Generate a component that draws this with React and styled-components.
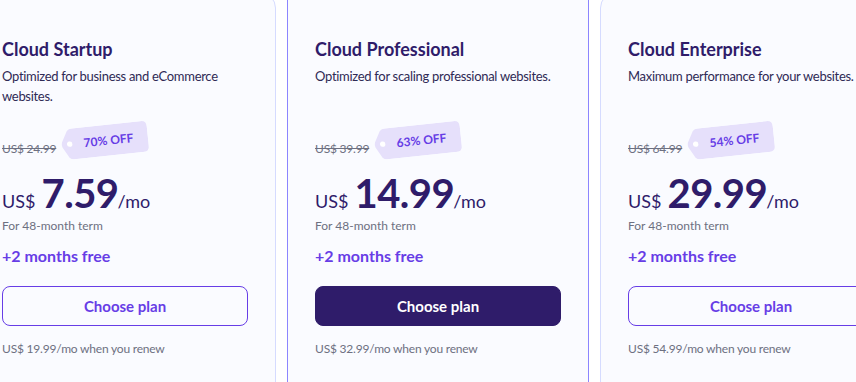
import React from "react";
import styled, { createGlobalStyle } from "styled-components";

const Global = createGlobalStyle`
  html, body { margin: 0; padding: 0; background: #ffffff; }
  body { font-family: Lato, "Noto Sans", sans-serif; overflow: hidden; }
  * { box-sizing: border-box; }
`;

const Row = styled.div`
  display: flex;
  gap: 11px;
  margin: -8px 0 0 -26px;
  width: 1000px;
`;

const Card = styled.div`
  width: 302px;
  flex: 0 0 302px;
  background: #fafbff;
  border: 1px solid ${(p) => (p.$featured ? "#8c85ff" : "#d5dbff")};
  border-radius: 16px;
  padding: ${(p) => (p.$featured ? "84px" : "44px")} 27px 60px;
  margin-top: ${(p) => (p.$featured ? "-40px" : "0")};
  & + & { margin-left: ${(p) => (p.$featured ? "0" : "1px")}; }
  display: flex;
  flex-direction: column;
`;

const Title = styled.h3`
  margin: 0;
  font-size: 18px;
  line-height: 24px;
  font-weight: 700;
  color: #2f1c6a;
`;

const Desc = styled.p`
  margin: 5px 0 0;
  font-size: 13px;
  line-height: 20px;
  min-height: 40px;
  color: #2f2a55;
  letter-spacing: -0.3px;
`;

const OldRow = styled.div`
  margin-top: 34px;
  display: flex;
  align-items: center;
  gap: 5px;
  height: 18px;
`;

const OldPrice = styled.span`
  font-size: 12px;
  line-height: 18px;
  color: #6d7081;
  text-decoration: line-through;
  letter-spacing: -0.2px;
`;

const Tag = styled.span`
  position: relative;
  display: inline-flex;
  align-items: center;
  justify-content: center;
  width: 87px;
  height: 31px;
  padding-left: 8px;
  transform: translateY(-9px) rotate(-6deg);
  font-size: 12px;
  font-weight: 700;
  color: #673de6;
  & > svg { position: absolute; inset: 0; z-index: 0; }
  & > span { position: relative; z-index: 1; }
`;

const PriceRow = styled.div`
  margin-top: 11px;
  display: flex;
  align-items: baseline;
  color: #2f1c6a;
  height: 48px;
`;

const Currency = styled.span`
  font-size: 18px;
  line-height: 48px;
  margin-right: 6px;
`;

const Amount = styled.span`
  font-size: 40px;
  line-height: 48px;
  font-weight: 700;
  letter-spacing: -0.5px;
  margin-right: -1px;
`;

const Per = styled.span`
  font-size: 18px;
  line-height: 48px;
`;

const Term = styled.div`
  margin-top: 1px;
  font-size: 12px;
  line-height: 16px;
  color: #6d7081;
`;

const Bonus = styled.div`
  margin-top: 12px;
  font-size: 16px;
  line-height: 20px;
  font-weight: 700;
  color: #673de6;
`;

const Button = styled.button`
  margin-top: 20px;
  height: 40px;
  width: 100%;
  border-radius: 8px;
  border: 1px solid ${(p) => (p.$primary ? "#2f1c6a" : "#673de6")};
  background: ${(p) => (p.$primary ? "#2f1c6a" : "transparent")};
  color: ${(p) => (p.$primary ? "#ffffff" : "#673de6")};
  font-family: inherit;
  font-size: 15px;
  font-weight: 700;
  cursor: pointer;
`;

const Renew = styled.div`
  margin-top: 15px;
  font-size: 12px;
  line-height: 16px;
  color: #6d7081;
  letter-spacing: -0.2px;
`;

const TagShape = () => (
  <svg width="87" height="31" viewBox="0 0 87 31">
    <path
      d="M12 0 H81 Q87 0 87 6 V25 Q87 31 81 31 H12 Q9 31 7 29 L1 18 Q0 15.5 1 13 L7 2 Q9 0 12 0 Z"
      fill="#e6e0fb"
    />
    <circle cx="8.5" cy="15.5" r="2.7" fill="#ffffff" />
  </svg>
);

const plans = [
  {
    name: "Cloud Startup",
    desc: "Optimized for business and eCommerce websites.",
    old: "US$ 24.99",
    off: "70% OFF",
    price: "7.59",
    renew: "US$ 19.99/mo when you renew",
  },
  {
    name: "Cloud Professional",
    desc: "Optimized for scaling professional websites.",
    old: "US$ 39.99",
    off: "63% OFF",
    price: "14.99",
    renew: "US$ 32.99/mo when you renew",
    featured: true,
  },
  {
    name: "Cloud Enterprise",
    desc: "Maximum performance for your websites.",
    old: "US$ 64.99",
    off: "54% OFF",
    price: "29.99",
    renew: "US$ 54.99/mo when you renew",
  },
];

export default function App() {
  return (
    <>
      <Global />
      <Row>
        {plans.map((p) => (
          <Card key={p.name} $featured={p.featured}>
            <Title>{p.name}</Title>
            <Desc>{p.desc}</Desc>
            <OldRow>
              <OldPrice>{p.old}</OldPrice>
              <Tag>
                <TagShape />
                <span>{p.off}</span>
              </Tag>
            </OldRow>
            <PriceRow>
              <Currency>US$</Currency>
              <Amount>{p.price}</Amount>
              <Per>/mo</Per>
            </PriceRow>
            <Term>For 48-month term</Term>
            <Bonus>+2 months free</Bonus>
            <Button $primary={p.featured}>Choose plan</Button>
            <Renew>{p.renew}</Renew>
          </Card>
        ))}
      </Row>
    </>
  );
}
